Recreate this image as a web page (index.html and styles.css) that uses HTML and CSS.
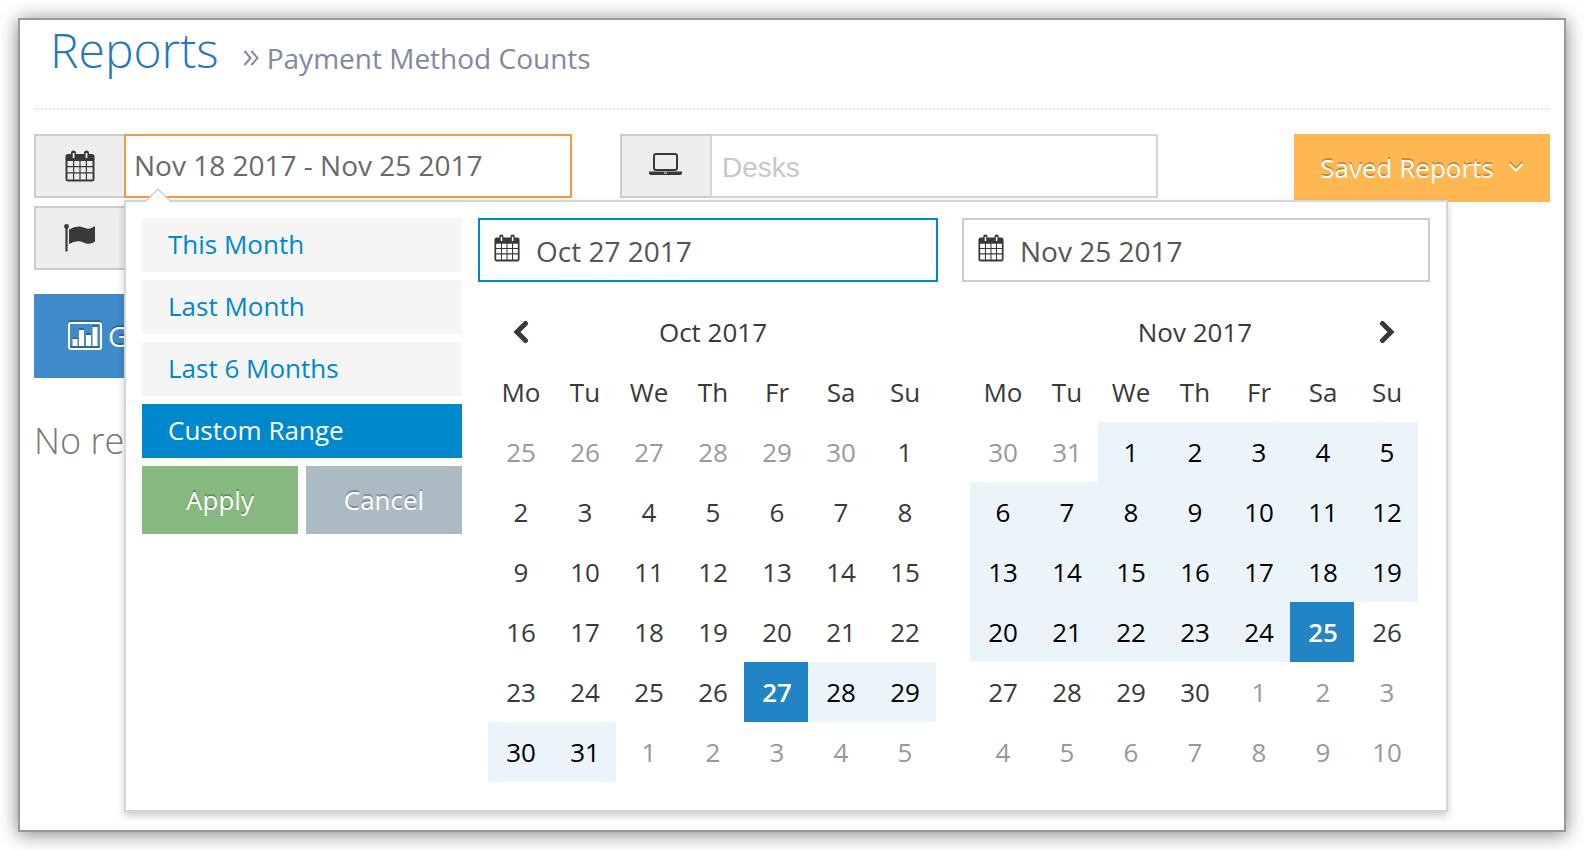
FILE: index.html
```html
<!DOCTYPE html>
<html lang="en">
<head>
    <meta charset="UTF-8">
    <meta name="viewport" content="width=device-width, initial-scale=1.0">
    <title>Reports</title>
    <link rel="stylesheet" href="styles.css">
</head>
<body>
    <svg class="sprite" aria-hidden="true">
        <symbol id="icon-calendar" viewBox="0 0 30 32">
            <path fill-rule="evenodd" d="M3 4h3V3a2.500 2.500 0 0 1 5 0v1h8V3a2.500 2.500 0 0 1 5 0v1h3a2.500 2.500 0 0 1 2.500 2.500v22.500a2.500 2.500 0 0 1-2.500 2.500H3A2.500 2.500 0 0 1 .500 29V6.500A2.500 2.500 0 0 1 3 4zM7.700 3v5h1.800V3zM20.600 3v5h1.800V3zM2.500 11v5h5.500v-5zM9.200 11v5h5.200v-5zM15.600 11v5h5.200v-5zM22 11v5h5.500v-5zM2.500 17.200v5h5.500v-5zM9.200 17.200v5h5.200v-5zM15.600 17.200v5h5.200v-5zM22 17.200v5h5.500v-5zM2.500 23.400v6h5.500v-6zM9.200 23.400v6h5.200v-6zM15.600 23.400v6h5.200v-6zM22 23.400v6h5.500v-6z"/>
        </symbol>
    </svg>

    <div class="page">
        <div class="page-header">
            <h1>Reports</h1>
            <h2>
                <svg class="icon-double" viewBox="0 0 16 18" aria-hidden="true"><path d="M1.500 2l6 7-6 7M8.500 2l6 7-6 7"/></svg>
                Payment Method Counts
            </h2>
        </div>

        <div class="filters">
            <div class="input-group date-group">
                <label class="addon" for="date-range" aria-label="Date range">
                    <svg class="icon-calendar" aria-hidden="true"><use href="#icon-calendar"/></svg>
                </label>
                <input class="date-range" id="date-range" type="text" value="Nov 18 2017 - Nov 25 2017">

                <div class="daterangepicker">
                    <div class="ranges">
                        <button class="range" type="button">This Month</button>
                        <button class="range" type="button">Last Month</button>
                        <button class="range" type="button">Last 6 Months</button>
                        <button class="range active" type="button">Custom Range</button>
                        <div class="range-buttons">
                            <button class="btn btn-apply" type="button">Apply</button>
                            <button class="btn btn-cancel" type="button">Cancel</button>
                        </div>
                    </div>

                    <div class="calendar">
                        <label class="calendar-input active">
                            <svg class="icon-calendar" aria-hidden="true"><use href="#icon-calendar"/></svg>
                            <input type="text" value="Oct 27 2017" aria-label="Start date">
                        </label>
                        <table>
                            <thead>
                                <tr>
                                    <th><button class="nav" type="button" aria-label="Previous month"><svg class="icon-nav" viewBox="0 0 16 24" aria-hidden="true"><path d="M12.500 3.500L4 12l8.500 8.500"/></svg></button></th>
                                    <th colspan="5">Oct 2017</th>
                                    <th></th>
                                </tr>
                                <tr><th>Mo</th><th>Tu</th><th>We</th><th>Th</th><th>Fr</th><th>Sa</th><th>Su</th></tr>
                            </thead>
                            <tbody>
                                <tr><td class="off">25</td><td class="off">26</td><td class="off">27</td><td class="off">28</td><td class="off">29</td><td class="off">30</td><td>1</td></tr>
                                <tr><td>2</td><td>3</td><td>4</td><td>5</td><td>6</td><td>7</td><td>8</td></tr>
                                <tr><td>9</td><td>10</td><td>11</td><td>12</td><td>13</td><td>14</td><td>15</td></tr>
                                <tr><td>16</td><td>17</td><td>18</td><td>19</td><td>20</td><td>21</td><td>22</td></tr>
                                <tr><td>23</td><td>24</td><td>25</td><td>26</td><td class="selected">27</td><td class="in-range">28</td><td class="in-range">29</td></tr>
                                <tr><td class="in-range">30</td><td class="in-range">31</td><td class="off">1</td><td class="off">2</td><td class="off">3</td><td class="off">4</td><td class="off">5</td></tr>
                            </tbody>
                        </table>
                    </div>

                    <div class="calendar calendar-right">
                        <label class="calendar-input">
                            <svg class="icon-calendar" aria-hidden="true"><use href="#icon-calendar"/></svg>
                            <input type="text" value="Nov 25 2017" aria-label="End date">
                        </label>
                        <table>
                            <thead>
                                <tr>
                                    <th></th>
                                    <th colspan="5">Nov 2017</th>
                                    <th><button class="nav" type="button" aria-label="Next month"><svg class="icon-nav" viewBox="0 0 16 24" aria-hidden="true"><path d="M3.500 3.500L12 12l-8.500 8.500"/></svg></button></th>
                                </tr>
                                <tr><th>Mo</th><th>Tu</th><th>We</th><th>Th</th><th>Fr</th><th>Sa</th><th>Su</th></tr>
                            </thead>
                            <tbody>
                                <tr><td class="off">30</td><td class="off">31</td><td class="in-range">1</td><td class="in-range">2</td><td class="in-range">3</td><td class="in-range">4</td><td class="in-range">5</td></tr>
                                <tr><td class="in-range">6</td><td class="in-range">7</td><td class="in-range">8</td><td class="in-range">9</td><td class="in-range">10</td><td class="in-range">11</td><td class="in-range">12</td></tr>
                                <tr><td class="in-range">13</td><td class="in-range">14</td><td class="in-range">15</td><td class="in-range">16</td><td class="in-range">17</td><td class="in-range">18</td><td class="in-range">19</td></tr>
                                <tr><td class="in-range">20</td><td class="in-range">21</td><td class="in-range">22</td><td class="in-range">23</td><td class="in-range">24</td><td class="selected">25</td><td>26</td></tr>
                                <tr><td>27</td><td>28</td><td>29</td><td>30</td><td class="off">1</td><td class="off">2</td><td class="off">3</td></tr>
                                <tr><td class="off">4</td><td class="off">5</td><td class="off">6</td><td class="off">7</td><td class="off">8</td><td class="off">9</td><td class="off">10</td></tr>
                            </tbody>
                        </table>
                    </div>
                </div>
            </div>

            <div class="input-group">
                <label class="addon" for="desks" aria-label="Desks">
                    <svg class="icon-laptop" viewBox="0 0 34 22" aria-hidden="true"><path fill-rule="evenodd" d="M7 0h19a3 3 0 0 1 3 3v12a3 3 0 0 1-3 3H7a3 3 0 0 1-3-3V3a3 3 0 0 1 3-3zM7 2a1 1 0 0 0-1 1v12a1 1 0 0 0 1 1h19a1 1 0 0 0 1-1V3a1 1 0 0 0-1-1zM0 18.500h33V20q0 2-3 2H3q-3 0-3-2zM15 19.500v1h3v-1z"/></svg>
                </label>
                <input class="desks" id="desks" type="text" placeholder="Desks">
            </div>

            <button class="btn btn-saved" type="button">
                Saved Reports
                <svg class="icon-down" viewBox="0 0 16 12" aria-hidden="true"><path d="M1.500 2L8 8.500 14.500 2"/></svg>
            </button>

            <div class="input-group">
                <label class="addon" for="flag" aria-label="Flag">
                    <svg class="icon-flag" viewBox="0 0 32 28" aria-hidden="true"><circle cx="2.500" cy="2.500" r="2.400"/><path d="M1.400 3h2.200v24.500H1.400zM5 5.500q5-3 10-3 3 0 6 1.500 2 1 4 .7 3-.6 6-2.700v15.500q-3 2.200-6.500 2.200-2.500 0-5-1.300-2.500-1.200-5-1.200Q10 17 5 20z"/></svg>
                </label>
                <input id="flag" type="text">
            </div>
        </div>

        <button class="btn btn-generate" type="button">
            <svg class="icon-chart" viewBox="0 0 34 28" aria-hidden="true"><path fill-rule="evenodd" d="M3 0h28a3 3 0 0 1 3 3v22a3 3 0 0 1-3 3H3a3 3 0 0 1-3-3V3a3 3 0 0 1 3-3zM3 2a1 1 0 0 0-1 1v22a1 1 0 0 0 1 1h28a1 1 0 0 0 1-1V3a1 1 0 0 0-1-1z"/><path d="M4.500 17h5v7h-5zM11 8h5v16h-5zM18 13h5v11h-5zM24.500 5h5v19h-5z"/></svg>
            Generate
        </button>
        <p class="empty">No results</p>
    </div>
</body>
</html>
```

FILE: styles.css
```css
* {
    box-sizing: border-box;
}
body {
    margin: 0;
    padding: 18px;
    background: #fff;
    color: #393939;
    font-family: "Open Sans", "Noto Sans", sans-serif;
    font-size: 26px;
}
button, input {
    font-family: inherit;
    font-size: 28px;
}
button {
    border: none;
    cursor: pointer;
}
svg {
    display: block;
    flex: none;
    fill: currentColor;
}
.sprite {
    width: 0;
    height: 0;
    position: absolute;
}
.page {
    min-height: calc(100vh - 36px);
    padding: 0 14px;
    border: 2px solid #999;
    box-shadow: 0 2px 18px rgba(0, 0, 0, 0.5);
}
.page-header {
    display: flex;
    align-items: flex-start;
    gap: 24px;
    height: 90px;
    padding: 0 16px;
    border-bottom: 2px dotted #e2e2e2;
}
h1 {
    margin: 0;
    font-size: 48px;
    font-weight: 300;
    line-height: 60px;
    color: #2679b5;
}
h2 {
    display: flex;
    align-items: center;
    gap: 8px;
    margin: 18px 0 0;
    font-size: 28px;
    font-weight: 400;
    line-height: 40px;
    color: #8089a0;
}

/* filters */
.filters {
    display: grid;
    grid-template-columns: 1fr 1fr auto;
    grid-auto-rows: 64px;
    gap: 8px 48px;
    margin-top: 24px;
}
.input-group {
    display: flex;
    min-width: 0;
}
.date-group {
    position: relative;
}
.addon {
    display: flex;
    align-items: center;
    justify-content: center;
    flex: 0 0 90px;
    background: #eee;
    border: 2px solid #ccc;
    border-right: none;
}
.input-group > input {
    flex: 1;
    min-width: 0;
    padding: 0 8px 2px;
    border: 2px solid #d5d5d5;
    background: #fff;
    color: #696969;
    outline: none;
}
.input-group > .date-range {
    border-color: #f59942;
}
.input-group > .desks {
    padding: 4px 10px 0;
    font-family: "Liberation Sans", Arial, sans-serif;
}
.desks::placeholder {
    color: #c8c8c8;
}
.icon-calendar {
    width: 30px;
    height: 32px;
}
.icon-laptop {
    width: 34px;
    height: 22px;
}
.addon .icon-laptop {
    margin-bottom: 4px;
}
.icon-flag {
    width: 32px;
    height: 28px;
}
.icon-double {
    width: 16px;
    height: 18px;
    fill: none;
    stroke: currentColor;
    stroke-width: 2;
}

/* buttons */
.btn {
    display: flex;
    align-items: center;
    justify-content: center;
    height: 68px;
    padding: 0 26px;
    color: #fff;
    text-shadow: 0 -2px 0 rgba(0, 0, 0, 0.25);
}
.btn svg {
    filter: drop-shadow(0 -2px 0 rgba(0, 0, 0, 0.25));
}
.btn-saved {
    gap: 14px;
    min-width: 256px;
    margin-left: 88px;
    background: #ffb752;
    font-size: 26px;
}
.icon-down {
    width: 16px;
    height: 12px;
    fill: none;
    stroke: currentColor;
    stroke-width: 2;
}
.btn-generate {
    gap: 6px;
    height: 84px;
    margin-top: 24px;
    padding: 0 34px;
    background: #428bca;
}
.icon-chart {
    width: 34px;
    height: 28px;
}
.empty {
    margin: 36px 0 0;
    font-size: 36px;
    font-weight: 300;
    line-height: 54px;
    color: #777;
}

/* date range dropdown */
.daterangepicker {
    position: absolute;
    top: 66px;
    left: 90px;
    z-index: 10;
    display: flex;
    padding: 16px 16px 28px;
    background: #fff;
    border: 2px solid #d5d5d5;
    box-shadow: 0 4px 8px rgba(0, 0, 0, 0.2);
}
.daterangepicker::before, .daterangepicker::after {
    content: "";
    position: absolute;
    border: 14px solid transparent;
    border-top: none;
}
.daterangepicker::before {
    top: -14px;
    left: 18px;
    border-bottom-color: #ccc;
}
.daterangepicker::after {
    top: -12px;
    left: 20px;
    border-width: 12px;
    border-top: none;
    border-bottom-color: #fff;
}
.ranges {
    display: flex;
    flex-direction: column;
    gap: 8px;
    width: 320px;
    margin-right: 16px;
}
.range {
    height: 54px;
    padding: 0 26px 2px;
    background: #f5f5f5;
    color: #08c;
    font-size: 26px;
    text-align: left;
}
.range.active {
    background: #08c;
    color: #fff;
}
.range-buttons {
    display: grid;
    grid-template-columns: 1fr 1fr;
    gap: 8px;
}
.range-buttons .btn {
    padding: 0;
    font-size: 26px;
}
.btn-apply {
    background: #87b87f;
}
.btn-cancel {
    background: #abbac3;
}
.calendar {
    width: 460px;
}
.calendar-right {
    width: 468px;
    margin-left: 24px;
}
.calendar-input {
    display: flex;
    align-items: center;
    gap: 16px;
    height: 64px;
    padding: 0 14px;
    border: 2px solid #ccc;
}
.calendar-input.active {
    border-color: #08c;
}
.calendar-input .icon-calendar {
    width: 26px;
    height: 28px;
    margin-bottom: 4px;
}
.calendar-input input {
    flex: 1;
    min-width: 0;
    padding: 2px 0 0;
    border: none;
    color: #555;
    outline: none;
}
table {
    width: 448px;
    margin: 20px 0 0 10px;
    border-collapse: collapse;
    table-layout: fixed;
}
.calendar-right table {
    margin-left: 8px;
}
th, td {
    height: 60px;
    padding: 0 0 0 2px;
    font-weight: 400;
    line-height: 36px;
    text-align: center;
}
.off {
    color: #999;
}
.in-range {
    background: #ebf4f8;
    color: #000;
}
.selected {
    background: #2283c5;
    color: #fff;
    font-weight: 600;
}
.nav {
    display: block;
    width: 100%;
    padding: 0;
    background: none;
    color: #393939;
}
.icon-nav {
    width: 16px;
    height: 24px;
    margin: 0 auto;
    fill: none;
    stroke: currentColor;
    stroke-width: 5;
    stroke-linecap: round;
}
```
